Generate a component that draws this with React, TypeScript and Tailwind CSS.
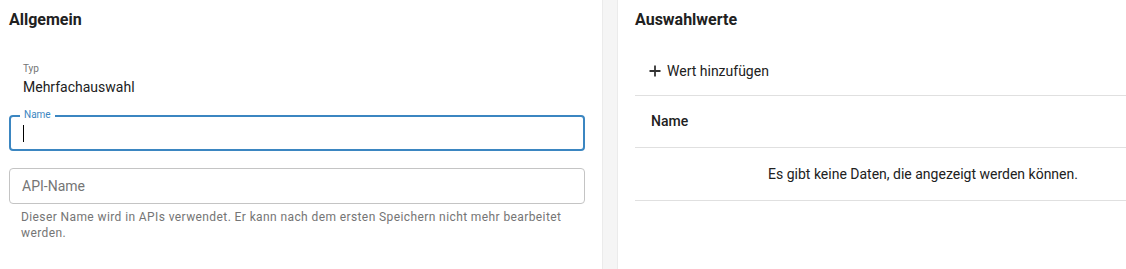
import React from "react";

function PlusIcon() {
  return (
    <svg width="12" height="12" viewBox="0 0 12 12" className="text-[#333]">
      <path d="M6 0.5v11M0.5 6h11" stroke="currentColor" strokeWidth="1.8" fill="none" />
    </svg>
  );
}

export default function App() {
  return (
    <div className="flex h-[269px] w-[1126px] overflow-hidden bg-white font-['Roboto','Liberation_Sans',sans-serif] text-[#212121]">
      {/* Allgemein */}
      <div className="w-[602px] shrink-0 pl-[9px] pr-[17px]">
        <h2 className="pt-[10px] text-[16px] font-bold leading-[20px]">Allgemein</h2>

        <div className="mt-[33px] pl-[14px]">
          <div className="text-[10px] leading-[12px] text-[#757575]">Typ</div>
          <div className="mt-[2px] text-[14px] leading-[20px]">Mehrfachauswahl</div>
        </div>

        {/* Name (fokussiert) */}
        <div className="relative mt-[18px] flex h-[36px] items-center rounded-[4px] border-2 border-[#3b86c1] px-[12px]">
          <span className="absolute -top-[8px] left-[9px] bg-white px-[4px] text-[10px] leading-[12px] text-[#3b86c1]">
            Name
          </span>
          <span className="h-[17px] w-px bg-black" />
        </div>

        {/* API-Name */}
        <div className="mt-[17px] flex h-[36px] items-center rounded-[4px] border border-[#c4c4c4] px-[12px]">
          <span className="text-[14px] text-[#757575]">API-Name</span>
        </div>
        <p className="mt-[5px] whitespace-nowrap pl-[12px] text-[12px] leading-[16px] tracking-[0.4px] text-[#757575]">
          Dieser Name wird in APIs verwendet. Er kann nach dem ersten Speichern nicht mehr bearbeitet
          <br />
          werden.
        </p>
      </div>

      {/* Trenner */}
      <div className="w-[16px] shrink-0 border-x border-[#ebebeb] bg-[#f5f5f5]" />

      {/* Auswahlwerte */}
      <div className="w-[602px] shrink-0 pl-[17px] pr-[9px]">
        <h2 className="pt-[10px] text-[16px] font-bold leading-[20px]">Auswahlwerte</h2>

        <button className="mt-[23px] flex h-[36px] items-center gap-[6px] pl-[14px] text-[14px] text-[#212121]">
          <PlusIcon />
          <span>Wert hinzufügen</span>
        </button>

        <div className="mt-[6px] border-t border-[#e0e0e0]">
          <div className="flex h-[52px] items-center border-b border-[#e0e0e0] pl-[16px] text-[14px] font-medium">
            Name
          </div>
          <div className="flex h-[53px] items-center justify-center border-b border-[#e0e0e0] text-[14px]">
            Es gibt keine Daten, die angezeigt werden können.
          </div>
        </div>
      </div>
    </div>
  );
}
